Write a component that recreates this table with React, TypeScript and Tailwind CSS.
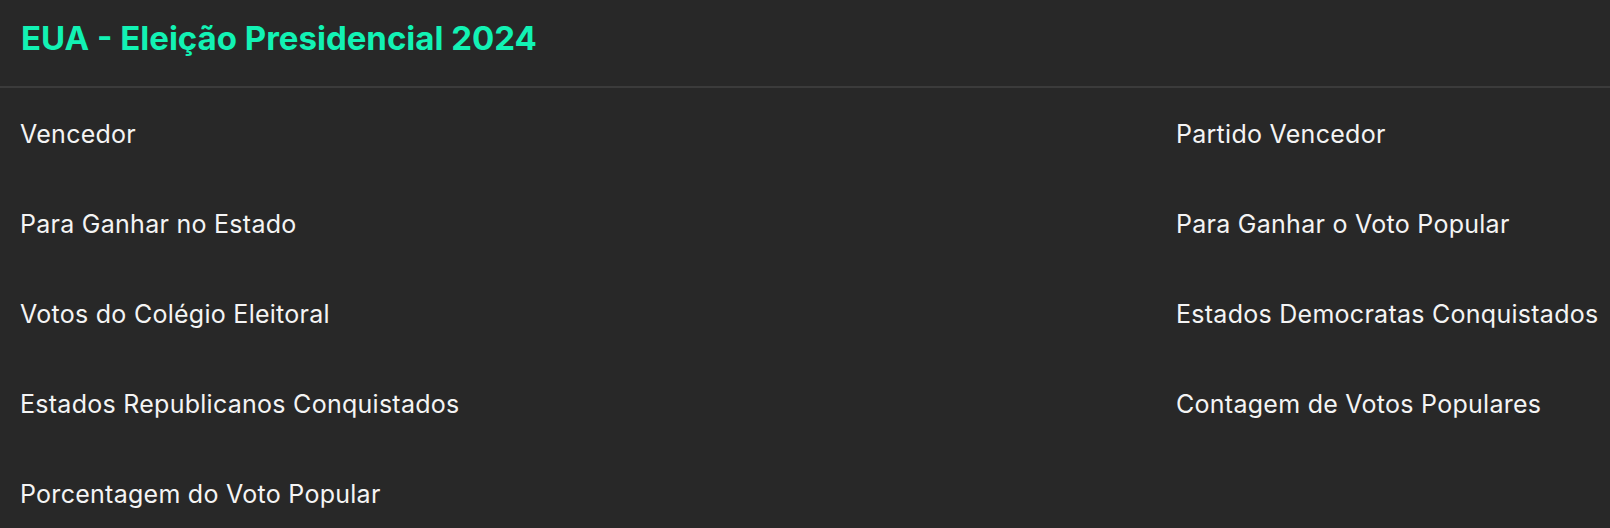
import React from "react";

const left = [
  "Vencedor",
  "Para Ganhar no Estado",
  "Votos do Colégio Eleitoral",
  "Estados Republicanos Conquistados",
  "Porcentagem do Voto Popular",
];
const right = [
  "Partido Vencedor",
  "Para Ganhar o Voto Popular",
  "Estados Democratas Conquistados",
  "Contagem de Votos Populares",
];

export default function App() {
  return (
    <div
      className="min-h-screen w-full bg-[#282828] text-[#f4f4f4]"
      style={{ fontFamily: "Inter, 'Noto Sans', sans-serif" }}
    >
      <header className="h-[88px] border-b-2 border-[#3b3b3b] pl-[21px] pt-[18px]">
        <h1 className="text-[33px] font-bold leading-[40px] text-[#12f2b4]">
          EUA - Eleição Presidencial 2024
        </h1>
      </header>
      <div className="grid grid-cols-[1156px_1fr] pl-[20px] pt-[1px]">
        <div className="flex flex-col">
          {left.map((t) => (
            <div key={t} className="whitespace-nowrap text-[25px] leading-[90px] tracking-[0.27px]">
              {t}
            </div>
          ))}
        </div>
        <div className="flex flex-col">
          {right.map((t) => (
            <div key={t} className="whitespace-nowrap text-[25px] leading-[90px] tracking-[0.27px]">
              {t}
            </div>
          ))}
        </div>
      </div>
    </div>
  );
}
